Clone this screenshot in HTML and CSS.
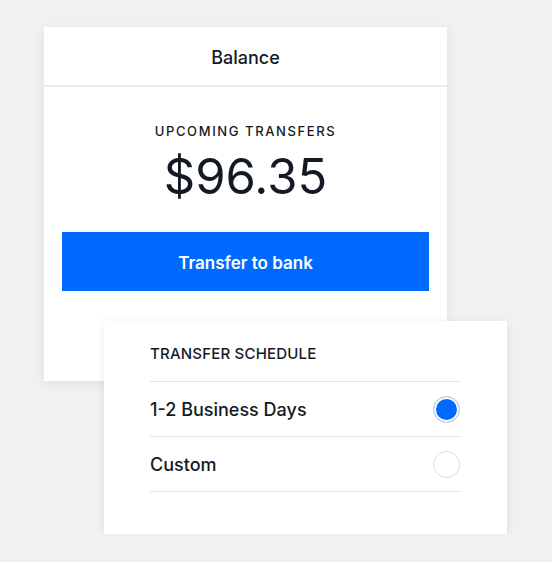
FILE: index.html
```html
<!DOCTYPE html>
<html>
<head>
<meta charset="utf-8">
<link rel="stylesheet" href="styles.css">
</head>
<body>
<div class="stage">
  <div class="card balance">
    <div class="card-header">Balance</div>
    <div class="balance-body">
      <div class="eyebrow">UPCOMING TRANSFERS</div>
      <div class="amount">$96.35</div>
      <button class="primary">Transfer to bank</button>
    </div>
  </div>
  <div class="card schedule">
    <div class="schedule-title">TRANSFER SCHEDULE</div>
    <div class="option">
      <span>1-2 Business Days</span>
      <span class="radio checked"></span>
    </div>
    <div class="option">
      <span>Custom</span>
      <span class="radio"></span>
    </div>
  </div>
</div>
</body>
</html>
```
FILE: styles.css
```css
html, body {
  margin: 0;
  padding: 0;
  background: #f1f1f1;
}
body {
  font-family: "Inter", "Open Sans", sans-serif;
  color: #141a24;
}
.stage {
  padding: 27px 0 0 44px;
}
.card {
  background: #fff;
  width: 403px;
  box-shadow: 0 2px 10px rgba(0, 0, 0, 0.08);
  box-sizing: border-box;
}
.balance {
  height: 354px;
}
.card-header {
  height: 60px;
  border-bottom: 2px solid #ececec;
  box-sizing: border-box;
  display: flex;
  align-items: center;
  justify-content: center;
  font-size: 18px;
  font-weight: 500;
  padding-top: 2px;
}
.balance-body {
  display: flex;
  flex-direction: column;
  align-items: center;
  padding: 35px 18px 0;
}
.eyebrow {
  font-size: 13px;
  font-weight: 500;
  letter-spacing: 1.6px;
  line-height: 18px;
}
.amount {
  font-size: 49px;
  line-height: 60px;
  margin-top: 7px;
}
.primary {
  margin-top: 25px;
  width: 100%;
  height: 59px;
  border: none;
  background: #006aff;
  color: #fff;
  font-family: inherit;
  font-weight: 600;
  font-size: 17px;
  padding: 2px 0 0;
}
.schedule {
  position: relative;
  margin: -60px 0 0 60px;
  height: 213px;
  padding: 23px 46px 0;
}
.schedule-title {
  font-size: 15px;
  font-weight: 500;
  letter-spacing: 0.2px;
  line-height: 20px;
  padding-bottom: 17px;
  border-bottom: 1px solid #e2e2e2;
}
.option {
  height: 55px;
  display: flex;
  align-items: center;
  justify-content: space-between;
  border-bottom: 1px solid #e2e2e2;
  font-size: 18px;
  font-weight: 500;
  box-sizing: border-box;
}
.radio {
  width: 27px;
  height: 27px;
  border-radius: 50%;
  border: 1.5px solid #dadada;
  box-sizing: border-box;
  margin-right: 1px;
}
.radio.checked {
  background: #006aff;
  box-shadow: inset 0 0 0 2px #fff;
  border: 1.5px solid #d8d8d8;
}
```
